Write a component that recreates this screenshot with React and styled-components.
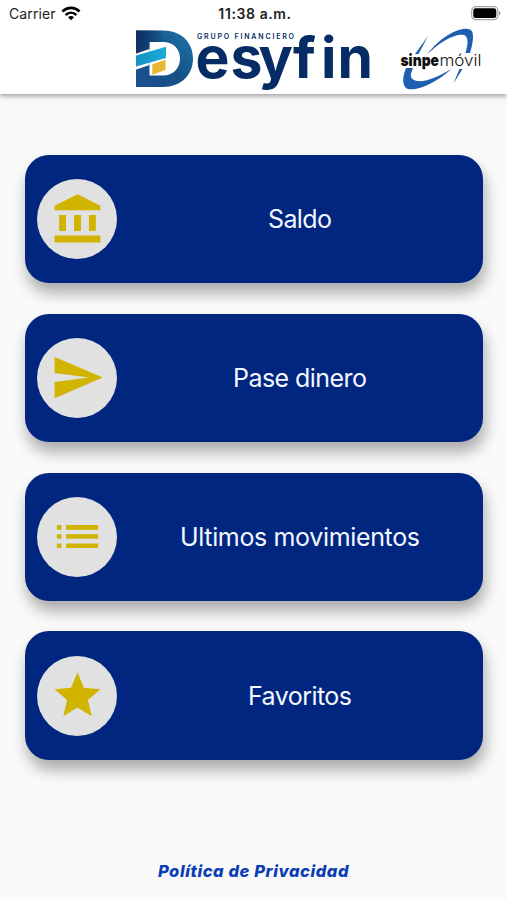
import React from 'react'
import styled, { createGlobalStyle } from 'styled-components'

const BankIcon = () => (
  <svg viewBox="0 0 24 24">
    <path d="M12 1L2 6v2h20V6zM4 10h3v7H4zM10.5 10h3v7h-3zM17 10h3v7h-3zM2 19h20v3H2z" />
  </svg>
)

const SendIcon = () => (
  <svg viewBox="0 0 24 24">
    <path d="M2.01 21L23 12 2.01 3 2 10l15 2-15 2z" />
  </svg>
)

const ListIcon = () => (
  <svg viewBox="0 0 24 24">
    <path d="M3 7h2v2H3zM3 11h2v2H3zM3 15h2v2H3zM7 7h14v2H7zM7 11h14v2H7zM7 15h14v2H7z" />
  </svg>
)

const StarIcon = () => (
  <svg viewBox="0 0 24 24">
    <path d="M12 17.27L18.18 21l-1.64-7.03L22 9.24l-7.19-.61L12 2 9.19 8.63 2 9.24l5.46 4.73L5.82 21z" />
  </svg>
)

const options = [
  { id: 'saldo', label: 'Saldo', width: 64, Icon: BankIcon },
  { id: 'pase', label: 'Pase dinero', width: 134, Icon: SendIcon },
  { id: 'movimientos', label: 'Ultimos movimientos', width: 240, Icon: ListIcon },
  { id: 'favoritos', label: 'Favoritos', width: 104, Icon: StarIcon },
]

function DesyfinLogo() {
  return (
    <svg width="240" height="64" viewBox="133 28 240 64">
      <defs>
        <linearGradient id="letter" x1="0" y1="1" x2="1" y2="0">
          <stop offset="0" stopColor="#1c4f93" />
          <stop offset="0.5" stopColor="#155184" />
          <stop offset="1" stopColor="#1f78ad" />
        </linearGradient>
        <linearGradient id="stem" x1="0" y1="0" x2="1" y2="0.3">
          <stop offset="0" stopColor="#0d2c5f" />
          <stop offset="1" stopColor="#0d2c5f" stopOpacity="0" />
        </linearGradient>
        <linearGradient id="stripe" x1="0" y1="0" x2="1" y2="0">
          <stop offset="0" stopColor="#1390c4" />
          <stop offset="1" stopColor="#1babd9" />
        </linearGradient>
      </defs>
      <path
        fill="url(#letter)"
        fillRule="evenodd"
        d="M136 30.5H163C181 30.5 193 42 193 58.5S181 87 163 87H136zM149.500 42V75.500H163C173 75.500 180 68.500 180 58.500S173 42 163 42z"
      />
      <path fill="url(#stem)" d="M136 30.500H163V42H149.500V56L136 61z" />
      <path fill="#fff" d="M135 54L149.500 49V52L135 57.500zM135 66L149.500 62V65L135 70z" />
      <path fill="url(#stripe)" d="M136 55.500L166 46.700V58L136 66.500z" />
      <path fill="#e6b631" d="M152.300 64.300L165.500 59.700V70L152.300 74.700z" />
      <LogoText
        x="195.500 230.500 258.500 293 321 337.500"
        y="78"
        fontSize="57"
        $weight={650}
      >
        esyfin
      </LogoText>
      <LogoText x="197" y="38.500" fontSize="7" textLength="97" $weight={600}>
        GRUPO FINANCIERO
      </LogoText>
    </svg>
  )
}

function SinpeLogo() {
  return (
    <svg width="86" height="64" viewBox="398 28 86 64">
      <g fill="#1f5fb2">
        <path d="M427.500 54C441 36 461 26 470 29.500C475 32 473 43 470 53H465.500C468 45 469 37 464 35C456 33 441 41 427.500 54z" />
        <path d="M406 68C402 78 402 87 408 89C419 91 437 82 451.500 69C438 77 422 84 414 80C409 78 411 73 413 68z" />
        <path d="M415 54L428 36L418.500 54z" />
        <path d="M459.500 69H462.500L453.500 83.500z" />
      </g>
      <SinpeText x="400.500" y="65.500" textLength="38.500" lengthAdjust="spacingAndGlyphs" $bold>
        sinpe
      </SinpeText>
      <SinpeText x="439.500" y="65.500" textLength="42" lengthAdjust="spacingAndGlyphs">
        móvil
      </SinpeText>
    </svg>
  )
}

function App() {
  return (
    <Screen>
      <GlobalStyle />
      <Header>
        <StatusBar>
          <Carrier>
            Carrier
            <svg width="20" height="15" viewBox="0 0 20 15">
              <g fill="none" stroke="#000" strokeWidth="2.600">
                <path d="M1.400 5.500C6.400.7 13.600.7 18.600 5.500" />
                <path d="M4.600 9C7.800 6 12.200 6 15.400 9" />
              </g>
              <path d="M7 11.300C8.800 9.700 11.200 9.700 13 11.300L10 14.300z" />
            </svg>
          </Carrier>
          <Time>11:38 a.m.</Time>
          <Battery>
            <svg width="30" height="15" viewBox="0 0 30 15">
              <rect x="0.700" y="0.700" width="26.200" height="13" rx="4" fill="#fff" stroke="#a5a5a5" strokeWidth="1.200" />
              <rect x="2.300" y="2.300" width="23" height="9.800" rx="2.400" />
              <path d="M28 5C30 5.800 30 8.600 28 9.400z" fill="#999" />
            </svg>
          </Battery>
        </StatusBar>
        <Logos>
          <DesyfinLogo />
          <SinpeLogo />
        </Logos>
      </Header>

      <Menu>
        {options.map(({ id, label, width, Icon }) => (
          <Option key={id}>
            <Circle>
              <Icon />
            </Circle>
            <Label>
              <svg width={width + 4} height="36">
                <text x="2" y="27" textLength={width}>{label}</text>
              </svg>
            </Label>
          </Option>
        ))}
      </Menu>

      <Privacy>Política de Privacidad</Privacy>
    </Screen>
  )
}

const GlobalStyle = createGlobalStyle`
  * {
    box-sizing: border-box;
  }

  body {
    margin: 0;
    background: #fafafa;
    font-family: Inter, 'Liberation Sans', sans-serif;
  }

  svg {
    display: block;
    flex-shrink: 0;
    overflow: visible;
  }
`

const Screen = styled.div`
  height: 900px;
  display: flex;
  flex-direction: column;
  background: #fafafa;
  overflow: hidden;
`

const Header = styled.header`
  height: 94px;
  flex-shrink: 0;
  background: white;
  box-shadow: 0 2px 5px rgba(0, 0, 0, 0.38);
`

const StatusBar = styled.div`
  height: 28px;
  display: grid;
  grid-template-columns: 1fr auto 1fr;
  align-items: center;
  padding: 0 6px 1px 9px;
  font-size: 14px;
  color: #222;
`

const Carrier = styled.div`
  display: flex;
  align-items: center;
  gap: 5px;
  letter-spacing: 0.1px;
`

const Time = styled.div`
  font-weight: 600;
  letter-spacing: 0.6px;
`

const Battery = styled.div`
  justify-self: end;
`

const Logos = styled.div`
  display: flex;
  gap: 25px;
  padding-left: 133px;
`

const LogoText = styled.text`
  font-family: Inter, sans-serif;
  font-weight: ${({ $weight }) => $weight};
  fill: #052c64;
`

const SinpeText = styled.text`
  font-size: 16.5px;
  font-weight: ${({ $bold }) => ($bold ? 900 : 300)};
  fill: #111;
`

const Menu = styled.main`
  display: flex;
  flex-direction: column;
  gap: 30.5px;
  padding: 61px 24.5px 0 25.3px;
`

const Option = styled.div`
  height: 128.300px;
  display: flex;
  align-items: center;
  padding-left: 12px;
  border-radius: 24px;
  background: #00267f;
  box-shadow: 2px 10px 15px rgba(0, 0, 0, 0.32);
`

const Circle = styled.div`
  width: 80px;
  height: 80px;
  flex-shrink: 0;
  display: flex;
  align-items: center;
  justify-content: center;
  border-radius: 50%;
  background: #e1e1e2;

  svg {
    width: 55px;
    height: 55px;
    fill: #d0b400;
  }
`

const Label = styled.div`
  flex: 1;
  display: flex;
  justify-content: center;

  text {
    font-size: 25px;
    fill: #f4f7ff;
  }
`

const Privacy = styled.footer`
  margin-top: 99px;
  text-align: center;
  font-size: 16.5px;
  font-weight: 800;
  font-style: italic;
  letter-spacing: 0.6px;
  line-height: 24px;
  color: #0b3cb8;
`

export default App
